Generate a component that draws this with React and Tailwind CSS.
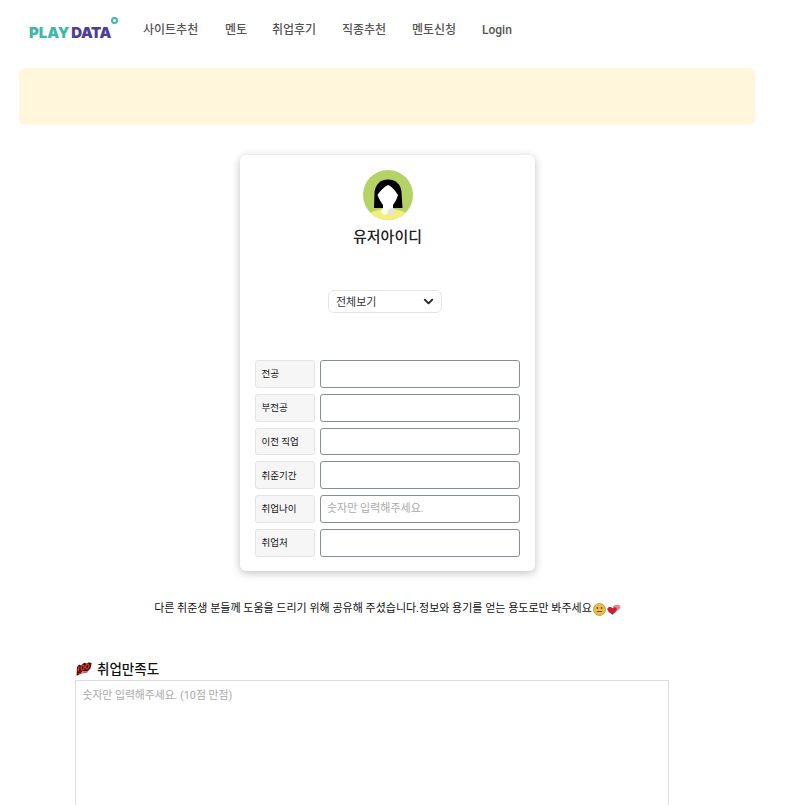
import React from 'react';
import { ChevronDown } from 'lucide-react';

const FONT = "font-['Roboto','Noto_Sans_CJK_KR',sans-serif]";

const navItems = [
  { label: '사이트추천', className: 'w-[82px]' },
  { label: '멘토', className: 'w-[47px]' },
  { label: '취업후기', className: 'w-[70px]' },
  { label: '직종추천', className: 'w-[70px]' },
  { label: '멘토신청', className: 'w-[70px]' },
  { label: 'Login', className: 'w-[40px]' },
];

const fields = [
  { label: '전공' },
  { label: '부전공' },
  { label: '이전 직업' },
  { label: '취준기간' },
  { label: '취업나이', placeholder: '숫자만 입력해주세요.' },
  { label: '취업처' },
];

function Avatar() {
  return (
    <svg width="50" height="50" viewBox="0 0 50 50" className="block">
      <defs>
        <clipPath id="avatar-clip">
          <circle cx="25" cy="25" r="25" />
        </clipPath>
      </defs>
      <g clipPath="url(#avatar-clip)">
        <rect width="50" height="50" fill="#b4d265" />
        <ellipse cx="25" cy="56" rx="28" ry="17" fill="#f2ef7c" />
        <path d="M11 38 L11.5 22 C12.5 14 18 9.5 25 9.5 C32 9.5 38 14 38.5 22 L39.5 38 Z" fill="#000" />
        <path d="M25 15 C28 16 32 20 35 25 C34 29 32 32 30 35 L30 40 L20 40 L20 35 C18 32 16 29 14.5 25 C17 21 21 17 25 15 Z" fill="#fff" />
        <circle cx="21.5" cy="41.5" r="3.2" fill="#fff" />
        <circle cx="28.7" cy="41.5" r="3.2" fill="#e4e4e4" />
      </g>
    </svg>
  );
}

function SmileEmoji() {
  return (
    <svg width="13" height="13" viewBox="0 0 13 13" className="shrink-0">
      <circle cx="6.5" cy="6.5" r="6" fill="#ecc04a" stroke="#a98433" strokeWidth="0.7" />
      <circle cx="4.4" cy="5" r="0.9" fill="#5b4321" />
      <circle cx="8.6" cy="5" r="0.9" fill="#5b4321" />
      <path d="M3.8 8.6 L9.2 8.6" fill="none" stroke="#5b4321" strokeWidth="0.9" />
    </svg>
  );
}

function HeartsEmoji() {
  return (
    <svg width="14" height="11" viewBox="0 0 14 11" className="shrink-0">
      <path d="M6 3 C7 0.5 11.5 0 13.2 2 C14.4 4 11.5 6.5 8 8 Z" fill="#d98a90" />
      <path d="M5.5 10.8 C3 9 0 7 0.3 4.8 C0.8 2.6 4 2.2 5.5 4.2 C7 2.4 10.2 3.2 9.8 5.6 C9.2 7.6 7.4 9.2 5.5 10.8 Z" fill="#c9202c" />
    </svg>
  );
}

function HundredEmoji() {
  return (
    <svg width="16" height="14" viewBox="0 0 16 14" className="shrink-0">
      <path d="M0.5 13.5 L1 5 L3 2.5 L5 3.5 L8 0.8 L11 1.5 L13 0.3 L15.7 1.2 L14.5 6.5 L11.5 9.5 L6 9.5 L5 11.5 L1 13.8 Z" fill="#4a1510" />
      <path d="M2.8 4.5 L2.2 9.5" stroke="#e4352a" strokeWidth="1.3" fill="none" />
      <ellipse cx="6.6" cy="5.6" rx="1.4" ry="2.4" transform="rotate(14 6.6 5.6)" fill="none" stroke="#e4352a" strokeWidth="1.1" />
      <ellipse cx="11.2" cy="4.6" rx="1.5" ry="2.4" transform="rotate(14 11.2 4.6)" fill="none" stroke="#e4352a" strokeWidth="1.1" />
      <path d="M1.5 11.8 L11.5 10" stroke="#c42a20" strokeWidth="0.9" fill="none" />
    </svg>
  );
}

function App() {
  return (
    <div className={`${FONT} h-[805px] overflow-hidden bg-white text-black`}>
      <nav className="flex h-[60px] items-center pl-[29px]">
        <div className="relative flex w-[114px] pt-[5px] font-['Inter',sans-serif] text-[15px] leading-none font-black tracking-[-0.1px]">
          <span className="text-[#3fb8ab]">PLAY</span>
          <span className="ml-[2px] tracking-[-0.4px] text-[#4d3f97]">DATA</span>
          <span className="absolute top-[-3px] left-[82px] size-[6.5px] rounded-full border-[2px] border-[#3fb8ab]" />
        </div>
        {navItems.map((item) => (
          <a key={item.label} className={`${item.className} text-[12px] font-medium whitespace-nowrap text-[#555]`}>
            {item.label}
          </a>
        ))}
      </nav>

      <div className="mt-[8px] ml-[19px] h-[57px] w-[736px] rounded-md bg-[#fff6db]" />

      <div className="mx-auto mt-[30px] h-[416px] w-[295px] -translate-x-[6px] rounded-md bg-white px-[15px] pt-[15px] shadow-[0_2px_8px_rgba(0,0,0,0.25)]">
        <div className="flex flex-col items-center">
          <Avatar />
          <h2 className="mt-[7px] text-[15px] leading-[20px] font-medium text-[#222]">유저아이디</h2>
        </div>

        <div className="mt-[43px] flex justify-center pr-[5px]">
          <div className="flex h-[23px] w-[114px] items-center justify-between rounded-md border border-[#e5e5e5] pr-[5px] pl-[7px] text-[11px] text-[#333]">
            <span className="pt-[3px]">전체보기</span>
            <ChevronDown size={15} strokeWidth={3} className="text-[#222]" />
          </div>
        </div>

        <div className="mt-[47px] flex flex-col gap-[6px]">
          {fields.map((field) => (
            <div key={field.label} className="flex h-[27.75px] gap-[5px]">
              <div className="flex w-[60px] items-center rounded-[3px] border border-[#e4e4e4] bg-[#f6f6f6] pt-[1px] pl-[5.5px] text-[9.5px] text-[#111]">
                {field.label}
              </div>
              <input
                readOnly
                placeholder={field.placeholder}
                className="w-[200px] rounded-[3px] border border-[#868e96] bg-white px-[6px] text-[11px] outline-none placeholder:text-[#aaa]"
              />
            </div>
          ))}
        </div>
      </div>

      <div className="mt-[30px] flex items-center justify-center gap-[1px] pt-[1px] pr-[12px] text-[11px] leading-[14px] whitespace-nowrap text-[#111]">
        <span>다른 취준생 분들께 도움을 드리기 위해 공유해 주셨습니다.정보와 용기를 얻는 용도로만 봐주세요</span>
        <SmileEmoji />
        <HeartsEmoji />
      </div>

      <div className="mt-[44px] ml-[75px] w-[594px]">
        <div className="mb-[2px] flex items-center gap-[5px] pl-[1px]">
          <HundredEmoji />
          <span className="text-[13.5px] leading-[18px] font-medium text-[#111]">취업만족도</span>
        </div>
        <textarea
          readOnly
          placeholder="숫자만 입력해주세요. (10점 만점)"
          className="block h-[200px] w-full resize-none border border-[#ddd] px-[6.5px] py-[7px] text-[10.8px] leading-[16px] outline-none placeholder:text-[#aaa]"
        />
      </div>
    </div>
  );
}

export default App;
